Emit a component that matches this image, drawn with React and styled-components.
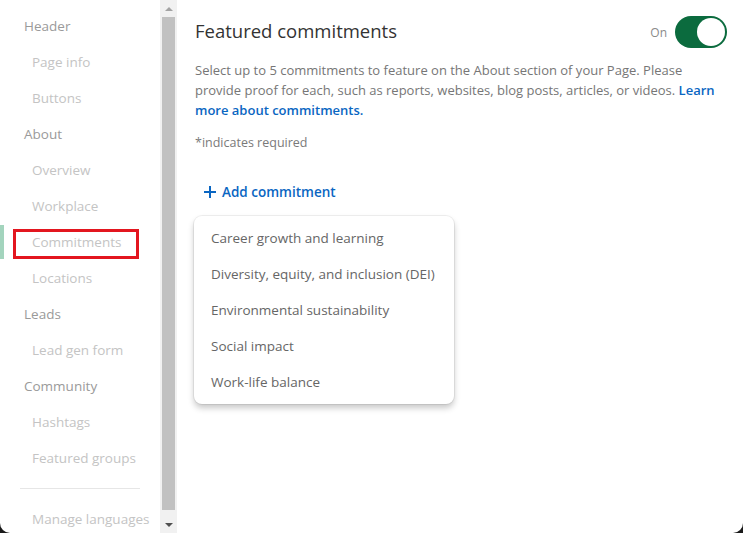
import React from "react";
import styled, { createGlobalStyle } from "styled-components";

const Global = createGlobalStyle`
  html, body { margin: 0; padding: 0; background: #1a1a1a; }
  body { font-family: "Open Sans", "Noto Sans", sans-serif; }
  *, *::before, *::after { box-sizing: border-box; }
`;

const Frame = styled.div`
  width: 743px;
  height: 533px;
  display: flex;
  background: #fff;
  border-bottom-left-radius: 10px;
  border-bottom-right-radius: 10px;
  overflow: hidden;
`;

const Sidebar = styled.nav`
  width: 160px;
  flex-shrink: 0;
  display: flex;
  flex-direction: column;
  padding-top: 8px;
  position: relative;
`;

const NavItem = styled.div`
  position: relative;
  height: 36px;
  flex-shrink: 0;
  display: flex;
  align-items: center;
  padding-left: ${(p) => (p.$sub ? 32 : 24)}px;
  font-size: 13.5px;
  color: ${(p) => (p.$sub ? "#c4c4c4" : "#9a9a9a")};
  white-space: nowrap;
  ${(p) =>
    p.$active &&
    `
    &::before {
      content: "";
      position: absolute;
      left: 0; top: 1px; bottom: 1px;
      width: 4px;
      background: #a3d4bd;
    }
    &::after {
      content: "";
      position: absolute;
      left: 13px; top: 5px;
      width: 126px; height: 30px;
      border: 3px solid #e3161f;
    }
  `}
`;

const Divider = styled.hr`
  flex-shrink: 0;
  border: 0;
  border-top: 1px solid #e6e6e6;
  margin: 12px 20px 12px 20px;
  width: 120px;
`;

const Scrollbar = styled.div`
  width: 17px;
  flex-shrink: 0;
  background: #f1f1f1;
  display: flex;
  flex-direction: column;
  align-items: center;
  padding: 0 2px;
`;

const Arrow = styled.div`
  height: 17px;
  width: 100%;
  display: flex;
  align-items: center;
  justify-content: center;
  &::before {
    content: "";
    border-left: 4px solid transparent;
    border-right: 4px solid transparent;
    ${(p) =>
      p.$down
        ? "border-top: 4px solid #505050;"
        : "border-bottom: 4px solid #a3a3a3;"}
  }
`;

const Thumb = styled.div`
  flex: 1;
  width: 100%;
  background: #c1c1c1;
  margin-bottom: 6px;
`;

const Main = styled.main`
  flex: 1;
  padding: 16px 16px 0 18px;
  display: flex;
  flex-direction: column;
`;

const HeaderRow = styled.div`
  display: flex;
  align-items: center;
  justify-content: space-between;
  height: 32px;
`;

const Title = styled.h1`
  margin: -4px 0 0;
  font-size: 18.5px;
  font-weight: 400;
  color: #333;
`;

const ToggleWrap = styled.div`
  display: flex;
  align-items: center;
  gap: 8px;
`;

const ToggleLabel = styled.span`
  font-size: 12px;
  color: #8a8a8a;
`;

const Toggle = styled.div`
  width: 52px;
  height: 32px;
  border-radius: 16px;
  background: #0b6b3e;
  position: relative;
  &::after {
    content: "";
    position: absolute;
    right: 2px;
    top: 2px;
    width: 28px;
    height: 28px;
    border-radius: 50%;
    background: #fff;
  }
`;

const Desc = styled.p`
  margin: 12px 0 0;
  font-size: 13px;
  line-height: 20px;
  color: #767676;
`;

const Link = styled.a`
  color: #0a66c2;
  font-weight: 600;
  text-decoration: none;
`;

const Required = styled.p`
  margin: 14px 0 0;
  font-size: 12.5px;
  color: #7a7a7a;
`;

const AddButton = styled.button`
  margin-top: 32px;
  align-self: flex-start;
  background: none;
  border: 0;
  padding: 0 0 0 8px;
  display: flex;
  align-items: center;
  gap: 5px;
  font-family: inherit;
  font-size: 13.5px;
  font-weight: 600;
  color: #0a66c2;
  cursor: pointer;
`;

const Menu = styled.ul`
  list-style: none;
  margin: 15px 0 0 -1px;
  padding: 4px 0;
  width: 260px;
  border-radius: 8px;
  background: #fff;
  box-shadow: 0 0 0 1px rgba(0, 0, 0, 0.06), 0 4px 6px rgba(0, 0, 0, 0.22);
`;

const MenuItem = styled.li`
  height: 36px;
  display: flex;
  align-items: center;
  padding-left: 17px;
  font-size: 13.5px;
  color: #666;
  white-space: nowrap;
`;

const nav = [
  ["Header", false],
  ["Page info", true],
  ["Buttons", true],
  ["About", false],
  ["Overview", true],
  ["Workplace", true],
  ["Commitments", true, true],
  ["Locations", true],
  ["Leads", false],
  ["Lead gen form", true],
  ["Community", false],
  ["Hashtags", true],
  ["Featured groups", true],
];

const options = [
  "Career growth and learning",
  "Diversity, equity, and inclusion (DEI)",
  "Environmental sustainability",
  "Social impact",
  "Work-life balance",
];

export default function App() {
  return (
    <>
      <Global />
      <Frame>
        <Sidebar>
          {nav.map(([label, sub, active]) => (
            <NavItem key={label} $sub={sub} $active={active}>
              {label}
            </NavItem>
          ))}
          <Divider />
          <NavItem $sub>Manage languages</NavItem>
        </Sidebar>
        <Scrollbar>
          <Arrow />
          <Thumb />
          <Arrow $down />
        </Scrollbar>
        <Main>
          <HeaderRow>
            <Title>Featured commitments</Title>
            <ToggleWrap>
              <ToggleLabel>On</ToggleLabel>
              <Toggle />
            </ToggleWrap>
          </HeaderRow>
          <Desc>
            Select up to 5 commitments to feature on the About section of your
            Page. Please provide proof for each, such as reports, websites, blog
            posts, articles, or videos.{" "}
            <Link href="#">Learn more about commitments.</Link>
          </Desc>
          <Required>*indicates required</Required>
          <AddButton>
            <svg width="14" height="14" viewBox="0 0 14 14">
              <path d="M7 1v12M1 7h12" stroke="#0a66c2" strokeWidth="2" />
            </svg>
            Add commitment
          </AddButton>
          <Menu>
            {options.map((o) => (
              <MenuItem key={o}>{o}</MenuItem>
            ))}
          </Menu>
        </Main>
      </Frame>
    </>
  );
}
